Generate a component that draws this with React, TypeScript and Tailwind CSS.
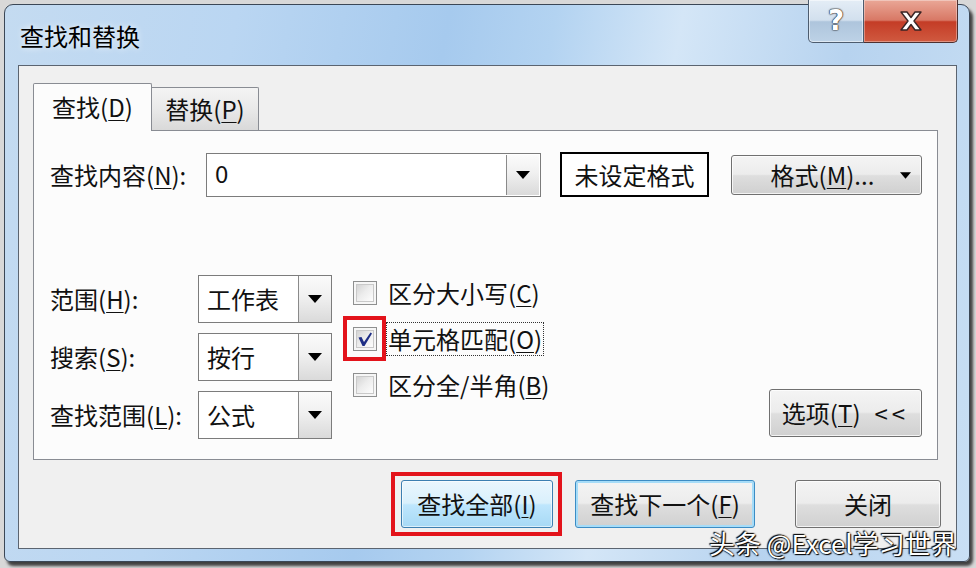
import React from 'react';

const U = ({ c }: { c: string }) => (
  <span className="underline decoration-1 underline-offset-[3px]">{c}</span>
);

const Arrow = ({ w = 14, h = 8 }: { w?: number; h?: number }) => (
  <svg width={w} height={h} viewBox="0 0 14 8">
    <polygon points="0,0 14,0 7,8" fill="#000" />
  </svg>
);

// win7 button faces
const btnGray =
  'rounded-[3px] border border-[#707070] bg-[linear-gradient(#f4f4f4_0%,#ececec_48%,#dedede_52%,#d0d0d0_100%)] shadow-[inset_0_0_0_1px_rgba(255,255,255,0.75)]';

const DropBtn = ({ w }: { w: number }) => (
  <div
    style={{ width: w }}
    className="h-full flex items-center justify-center border-l border-[#8a8a8a] bg-[linear-gradient(#fbfbfb_0%,#f0f0f0_45%,#dadada_100%)]"
  >
    <Arrow />
  </div>
);

const Check = ({ checked = false }: { checked?: boolean }) => (
  <div className="w-[24px] h-[24px] border border-[#8e8f8f] bg-[#f6f6f6] p-[2px] shrink-0">
    <div className="w-full h-full border border-[#c9c9c9] bg-[linear-gradient(135deg,#d4d4d4_0%,#ececec_45%,#fdfdfd_100%)] flex items-center justify-center">
      {checked && (
        <svg width="16" height="16" viewBox="0 0 16 16">
          <path d="M1.5 6.5 L4.5 6 L7 11 L13.5 1.5 L15 2.5 L7.5 15 L5.5 15 Z" fill="#1f2f86" />
        </svg>
      )}
    </div>
  </div>
);

const SmallCombo = ({ value }: { value: string }) => (
  <div className="w-[134px] h-[48px] border border-[#7c7c7c] bg-white flex">
    <div className="flex-1 pl-[8px] flex items-center text-[24px] leading-none">{value}</div>
    <DropBtn w={33} />
  </div>
);

export default function App() {
  return (
    <div className="font-['Noto_Sans_CJK_SC','Noto_Sans',sans-serif] relative w-[976px] h-[568px] overflow-hidden bg-[#d8d8d8] pt-[4px] pl-[4px] text-[#111]">
      <div className="w-[966px] h-[558px] rounded-t-[9px] rounded-b-[6px] border border-[#3b4756] bg-[linear-gradient(100deg,#c4dbf1_0%,#bad6f2_22%,#a6caee_42%,#b3d3f1_52%,#d4e6f7_64%,#b7d3ef_80%,#c9dff4_100%)] shadow-[3px_4px_3px_rgba(0,0,0,0.7)] flex flex-col">
        {/* title bar */}
        <div className="h-[60px] flex items-start justify-between pl-[15px]">
          <div className="mt-[17px] text-[24px] leading-[28px] text-black [text-shadow:0_0_6px_rgba(255,255,255,0.9)]">
            查找和替换
          </div>
          <div className="-mt-[5px] mr-[11px] flex">
            <div className="w-[56px] h-[43px] rounded-bl-[5px] border border-t-0 border-[#4d5c6e] bg-[linear-gradient(#e4edf6_0%,#d2e0ee_48%,#aec5dc_52%,#bdd2e6_100%)] shadow-[inset_0_0_0_1px_rgba(255,255,255,0.5)] flex items-center justify-center">
              <span className="font-['DejaVu_Sans',sans-serif] font-bold text-[28px] leading-none text-white [text-shadow:0_0_1px_#222,0_0_1px_#222,0_0_2px_#222]">
                ?
              </span>
            </div>
            <div className="w-[94px] h-[43px] rounded-br-[5px] border border-t-0 border-l-0 border-[#4d3030] bg-[linear-gradient(#eaa797_0%,#d87865_48%,#c43c26_52%,#d05a40_100%)] shadow-[inset_0_0_0_1px_rgba(255,255,255,0.35)] flex items-center justify-center">
              <svg width="24" height="22" viewBox="0 0 24 22">
                <path
                  d="M2 2 L8 2 L12 7.5 L16 2 L22 2 L15 11 L22 20 L16 20 L12 14.5 L8 20 L2 20 L9 11 Z"
                  fill="#fff"
                  stroke="#3a2424"
                  strokeWidth="1.4"
                  strokeLinejoin="round"
                />
              </svg>
            </div>
          </div>
        </div>

        {/* client area */}
        <div className="ml-[13px] mr-[12px] h-[484px] border border-[#5b6470] bg-[#f0f0f0] flex flex-col">
          {/* tabs */}
          <div className="pl-[14px] pt-[17px] flex items-end -mb-px relative z-10">
            <div className="w-[119px] h-[48px] border border-b-0 border-[#898c93] rounded-t-[2px] bg-[#fcfcfc] flex items-center justify-center text-[24px] leading-none pb-[2px]">
              查找(<U c="D" />)
            </div>
            <div className="w-[107px] h-[43px] mb-px border border-l-0 border-b-0 border-[#898c93] rounded-tr-[2px] bg-[linear-gradient(#f4f4f4_0%,#e9e9e9_50%,#d9d9d9_100%)] flex items-center justify-center text-[24px] leading-none">
              替换(<U c="P" />)
            </div>
          </div>

          {/* panel */}
          <div className="ml-[14px] w-[905px] h-[330px] border border-[#898c93] bg-[#fcfcfc] pt-[21px] pl-[16px] pr-[15px] pb-[20px] flex flex-col">
            <div className="flex items-center h-[45px]">
              <div className="w-[156px] text-[24px] leading-none">
                查找内容(<U c="N" />):
              </div>
              <div className="w-[335px] h-[44px] border border-[#7c7c7c] bg-white flex">
                <div className="flex-1 pl-[8px] flex items-center text-[24px] leading-none pb-[4px]">0</div>
                <div className="py-px pr-px h-full">
                  <DropBtn w={33} />
                </div>
              </div>
              <div className="ml-[19px] w-[149px] h-[45px] border-2 border-black bg-white flex items-center justify-center text-[24px] leading-none">
                未设定格式
              </div>
              <div className={`ml-[22px] w-[191px] h-[40px] ${btnGray} relative flex items-center justify-center text-[24px] leading-none`}>
                <span className="-ml-[8px]">
                  格式(<U c="M" />)...
                </span>
                <div className="absolute right-[10px] top-[16px]">
                  <Arrow w={11} h={7} />
                </div>
              </div>
            </div>

            <div className="mt-auto flex">
              <div className="grid grid-cols-[148px_134px] gap-y-[10px]">
                <div className="flex items-center text-[24px] leading-none">
                  范围(<U c="H" />):
                </div>
                <SmallCombo value="工作表" />
                <div className="flex items-center text-[24px] leading-none">
                  搜索(<U c="S" />):
                </div>
                <SmallCombo value="按行" />
                <div className="flex items-center text-[24px] leading-none">
                  查找范围(<U c="L" />):
                </div>
                <SmallCombo value="公式" />
              </div>

              <div className="ml-[21px] flex flex-col gap-[10px]">
                <div className="h-[36px] flex items-center">
                  <Check />
                  <span className="ml-[11px] text-[24px] leading-none">
                    区分大小写(<U c="C" />)
                  </span>
                </div>
                <div className="h-[36px] flex items-center">
                  <div className="relative">
                    <Check checked />
                    <div className="absolute -left-[10px] -top-[11px] w-[43px] h-[45px] border-[4px] border-[#e3131b]" />
                  </div>
                  <span className="ml-[9px] h-[34px] px-[1px] border border-dotted border-[#333] flex items-center text-[24px] leading-none">
                    单元格匹配(<U c="O" />)
                  </span>
                </div>
                <div className="h-[36px] flex items-center">
                  <Check />
                  <span className="ml-[11px] text-[24px] leading-none">
                    区分全/半角(<U c="B" />)
                  </span>
                </div>
              </div>

              <div className={`ml-auto self-end mb-[2px] w-[153px] h-[48px] ${btnGray} flex items-center justify-center text-[24px] leading-none`}>
                选项(<U c="T" />)<span className="ml-[14px] tracking-[4px]">&lt;&lt;</span>
              </div>
            </div>
          </div>

          {/* bottom buttons */}
          <div className="mt-[20px] pr-[15px] flex justify-end">
            <div className="relative">
              <div className="w-[152px] h-[48px] rounded-[3px] border border-[#3c7fb1] bg-[linear-gradient(#eaf6fd_0%,#d9f0fc_48%,#bee6fd_52%,#a7d9f5_100%)] shadow-[inset_0_0_0_1px_rgba(255,255,255,0.6)] flex items-center justify-center text-[24px] leading-none">
                查找全部(<U c="I" />)
              </div>
              <div className="absolute -left-[10px] -top-[8px] w-[171px] h-[64px] border-[4px] border-[#e3131b]" />
            </div>
            <div className="ml-[22px] w-[180px] h-[48px] rounded-[3px] border border-[#3c8cc4] bg-[linear-gradient(#f4f4f4_0%,#ececec_48%,#dedede_52%,#d0d0d0_100%)] shadow-[inset_0_0_0_2px_#a6dcf8] flex items-center justify-center text-[24px] leading-none">
              查找下一个(<U c="F" />)
            </div>
            <div className={`ml-[40px] w-[146px] h-[48px] ${btnGray} flex items-center justify-center text-[24px] leading-none`}>
              关闭
            </div>
          </div>
        </div>
      </div>

      {/* watermark */}
      <div className="absolute left-[709px] top-[527px] text-[26px] leading-[32px] text-white whitespace-nowrap [text-shadow:0_0_2px_#000,1px_1px_1px_#000,-1px_-1px_1px_#000]">
        头条 @Excel学习世界
      </div>
    </div>
  );
}
